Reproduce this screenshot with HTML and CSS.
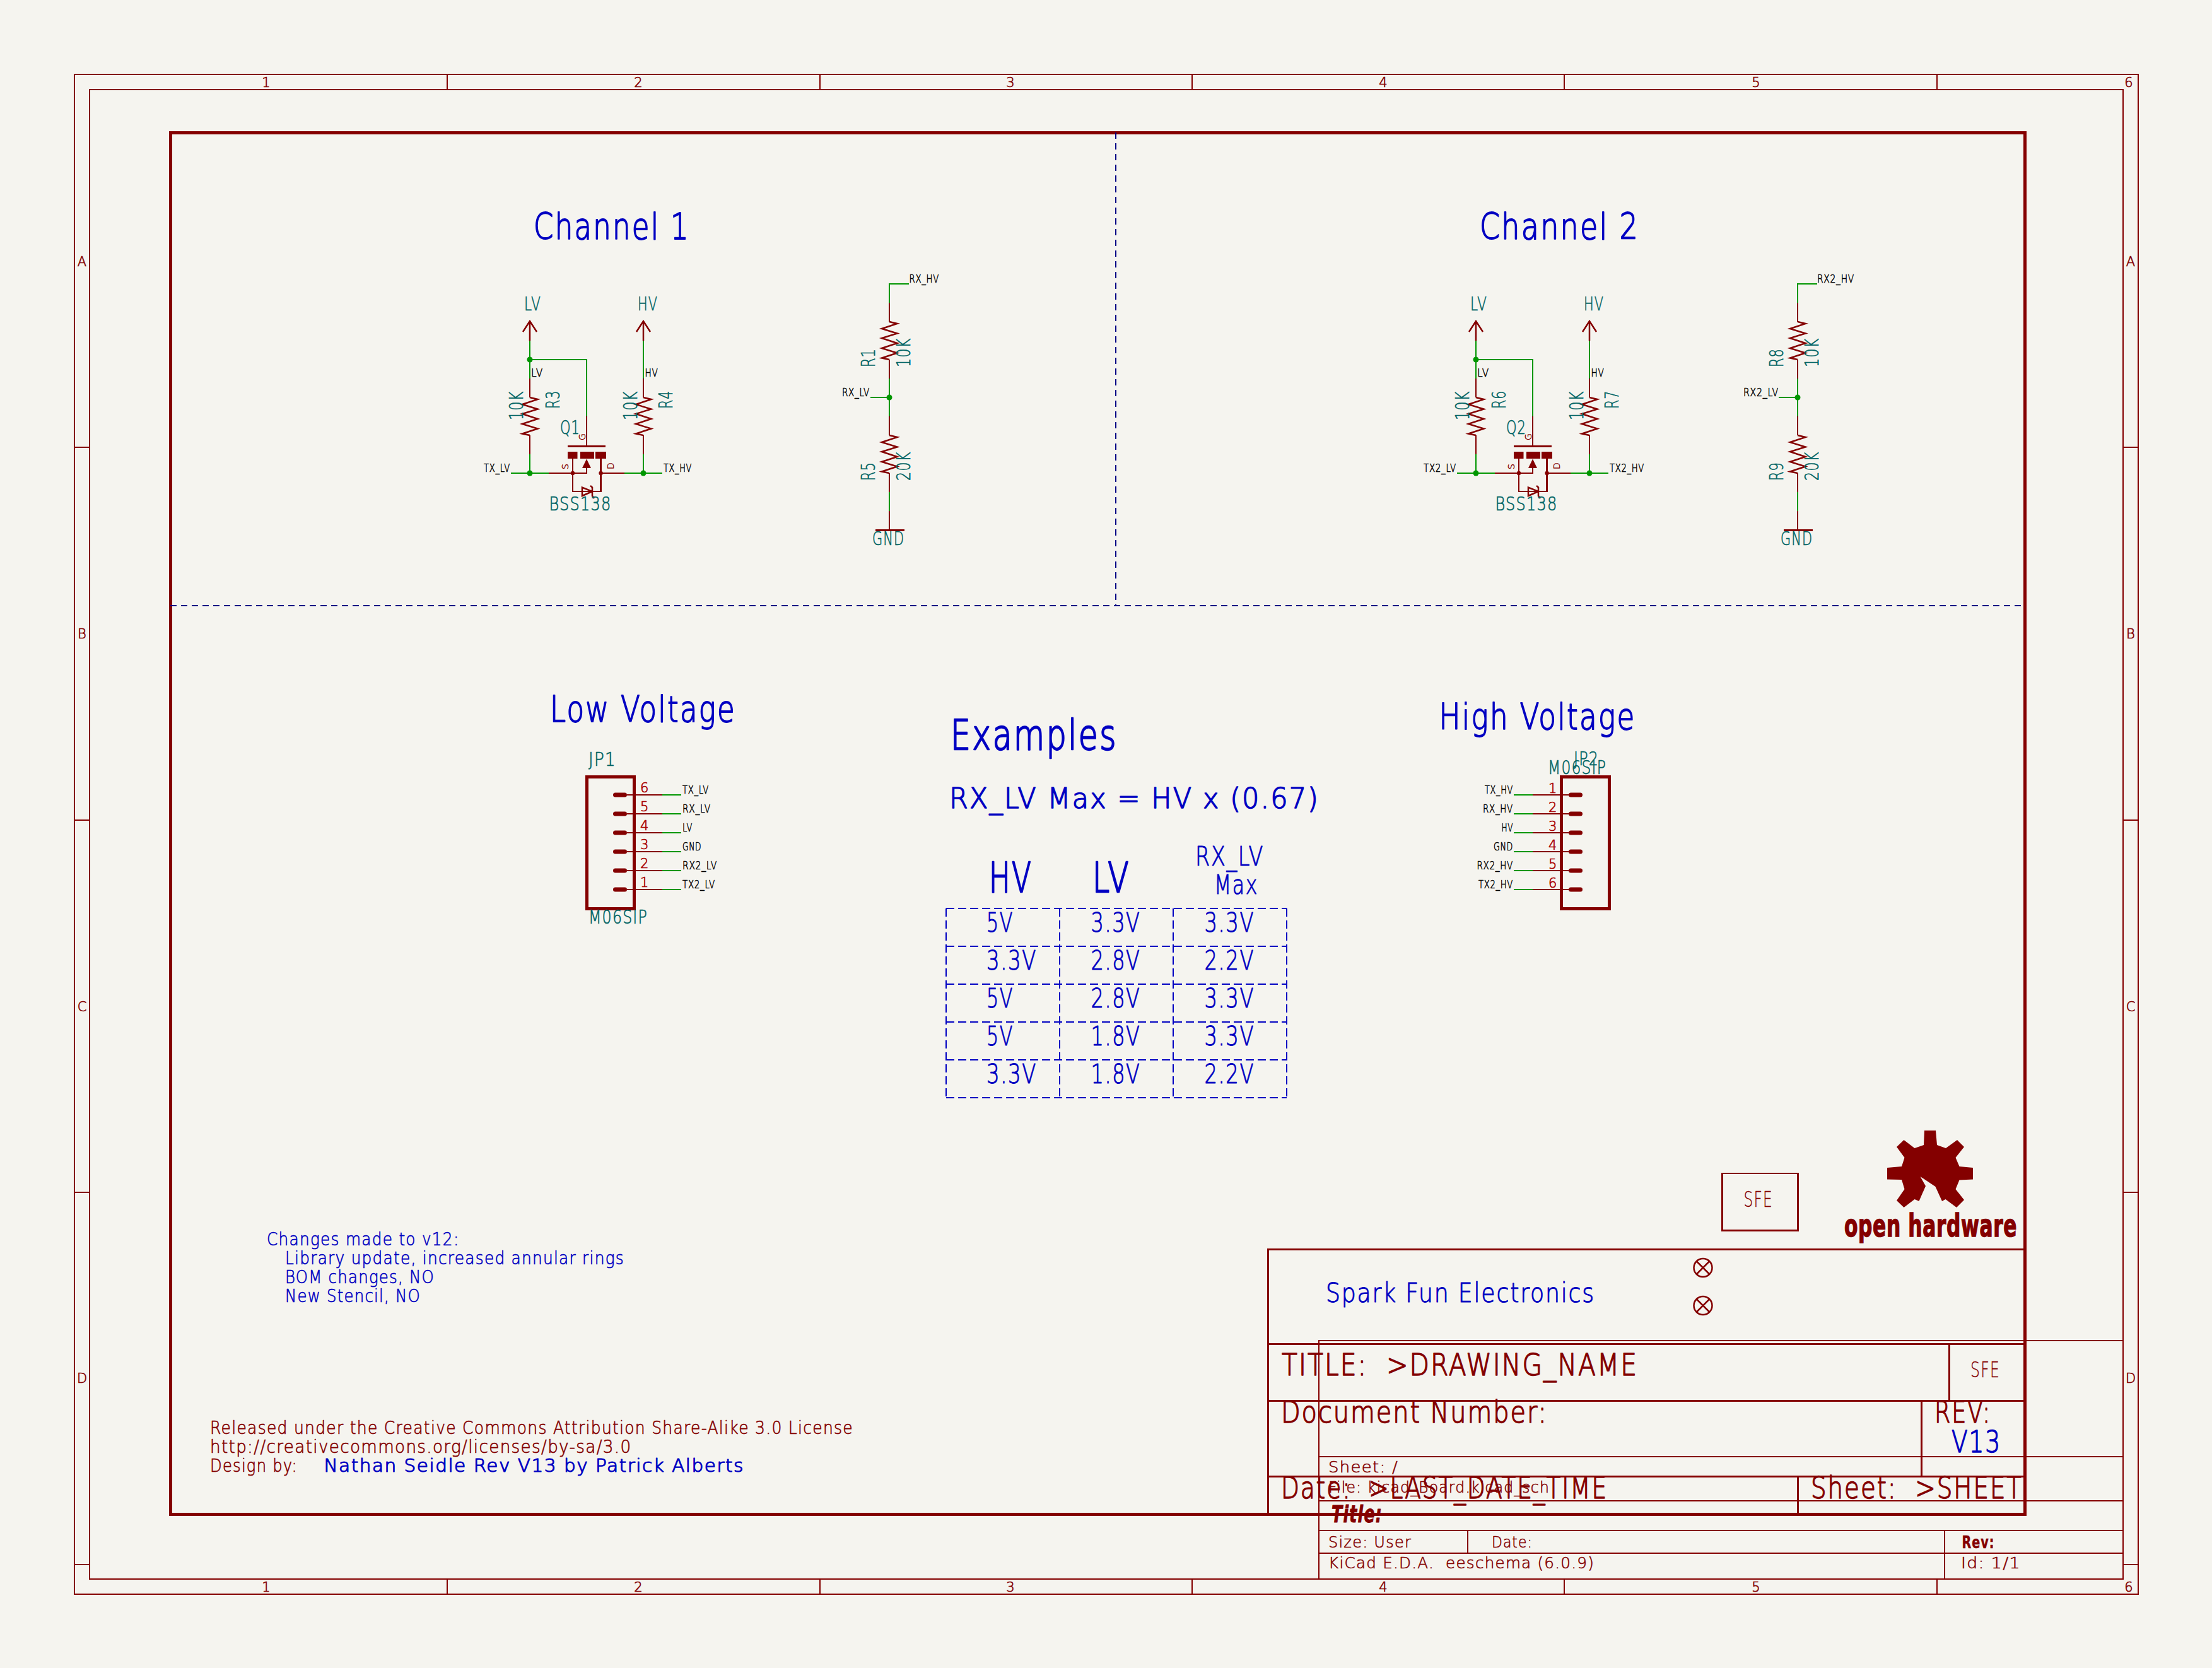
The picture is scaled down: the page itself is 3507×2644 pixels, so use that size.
FILE: index.html
```html
<!DOCTYPE html>
<html lang="en">
<head>
<meta charset="utf-8">
<title>KiCad schematic</title>
<link rel="stylesheet" href="styles.css">
</head>
<body>
<svg class="sheet" width="3507" height="2644" viewBox="0 0 3507 2644" xmlns="http://www.w3.org/2000/svg">
<defs>
  <path id="res" class="sym" d="M0 0L12.5 3L-12 11L12.5 18.5L-12 26L12.5 34L-12 42L12.5 49.5L-12 57.5L0 60"/>
  <g id="ch">
    <path class="wire crisp" d="M840 540V600M840 720V750M840 570H930V660M810 750H870M1020 540V600M1020 720V750M990 750H1050"/>
    <circle class="jw" cx="840" cy="570" r="4.5"/><circle class="jw" cx="840" cy="750" r="4.5"/><circle class="jw" cx="1020" cy="750" r="4.5"/>
    <path class="sym" d="M840 540V509M829 526L840 509L851 526M1020 540V509M1009 526L1020 509L1031 526"/>
    <path class="sym crisp" d="M840 600V630M840 690V720M1020 600V630M1020 690V720M930 660V707M870 750H930V742M908 727V779H952.6V727M952.6 750H990"/>
    <use href="#res" x="840" y="630"/><use href="#res" x="1020" y="630"/>
    <path class="bar crisp" d="M900 707H960"/>
    <rect class="fill" x="900" y="716" width="15.5" height="11"/><rect class="fill" x="920" y="716" width="22" height="11"/><rect class="fill" x="944" y="716" width="17" height="11"/>
    <path class="fill" d="M930 727.5L937 742H923Z"/>
    <circle class="fill" cx="908" cy="750" r="3.2"/><circle class="fill" cx="952.6" cy="750" r="3.2"/>
    <path class="sym" d="M923 772.500V786L939 779ZM936 770L939 772.500V786L942 790"/>
  </g>
  <g id="div">
    <path class="wire crisp" d="M1441 450H1410V480M1410 600V660M1380 630H1410M1410 780V810"/>
    <circle class="jw" cx="1410" cy="630" r="4.5"/>
    <path class="sym crisp" d="M1410 480V510M1410 570V600M1410 660V690M1410 750V780M1410 810V840"/>
    <use href="#res" x="1410" y="510"/><use href="#res" x="1410" y="690"/>
    <path class="bar crisp" d="M1388 840H1434"/>
  </g>
  <g id="pad"><path class="pad" d="M975.500 0H990.500"/></g>
</defs>

<!-- page frame -->
<g class="frame crisp">
  <rect x="118" y="118" width="3272" height="2409"/>
  <rect x="142" y="142" width="3224" height="2361"/>
  <path d="M709 118V142M1299.500 118V142M1890 118V142M2480 118V142M3071 118V142M709 2503V2527M1299.500 2503V2527M1890 2503V2527M2480 2503V2527M3071 2503V2527M118 709H142M118 1300H142M118 1890H142M118 2480H142M3366 709H3390M3366 1300H3390M3366 1890H3390M3366 2480H3390"/>
</g>
<g class="ftext">
  <text x="422" y="138">1</text><text x="1012" y="138">2</text><text x="1602" y="138">3</text><text x="2193" y="138">4</text><text x="2784" y="138">5</text><text x="3375" y="138">6</text>
  <text x="422" y="2523">1</text><text x="1012" y="2523">2</text><text x="1602" y="2523">3</text><text x="2193" y="2523">4</text><text x="2784" y="2523">5</text><text x="3375" y="2523">6</text>
  <text x="130" y="421.500">A</text><text x="130" y="1012">B</text><text x="130" y="1602.500">C</text><text x="130" y="2192">D</text>
  <text x="3378" y="421.500">A</text><text x="3378" y="1012">B</text><text x="3378" y="1602.500">C</text><text x="3378" y="2192">D</text>
</g>

<!-- kicad sheet title block -->
<path class="frame crisp" d="M2091 2503V2125H3366M2091 2308.500H3366M2091 2378.500H3366M2091 2425.500H3366M2091 2461.500H3366M2327 2425.500V2461.500M3083 2425.500V2503"/>
<text class="t tb r" x="2106" y="2334" textLength="111" lengthAdjust="spacingAndGlyphs">Sheet: /</text>
<text class="t tb r" x="2106" y="2366" textLength="351" lengthAdjust="spacingAndGlyphs">File: kicad_Board.kicad_sch</text>
<text class="t tbb r" x="2111" y="2412.500" textLength="81" lengthAdjust="spacingAndGlyphs">Title:</text>
<text class="t tb r" x="2106" y="2453" textLength="132" lengthAdjust="spacingAndGlyphs">Size: User</text>
<text class="t tb r" x="2365" y="2453" textLength="65" lengthAdjust="spacingAndGlyphs">Date:</text>
<text class="t tbr r" x="3110.500" y="2454" textLength="52" lengthAdjust="spacingAndGlyphs">Rev:</text>
<text class="t tb r" x="2106" y="2486" textLength="422" lengthAdjust="spacingAndGlyphs">KiCad E.D.A.  eeschema (6.0.9)</text>
<text class="t tb r" x="3109" y="2486" textLength="95" lengthAdjust="spacingAndGlyphs">Id: 1/1</text>

<!-- outer schematic frame -->
<rect class="thick crisp" x="270" y="210" width="2940.500" height="2190"/>
<path class="dash crisp" d="M1769 210V960M270 960H3210"/>

<!-- channels -->
<use href="#ch"/><use href="#ch" x="1500"/>
<use href="#div"/><use href="#div" x="1440"/>

<text class="t h1 b" x="846" y="379" textLength="248" lengthAdjust="spacingAndGlyphs">Channel 1</text>
<text class="t h1 b" x="2346" y="379" textLength="253" lengthAdjust="spacingAndGlyphs">Channel 2</text>

<text class="t fld g" x="831" y="492" textLength="27" lengthAdjust="spacingAndGlyphs">LV</text>
<text class="t fld g" x="1011" y="492" textLength="32" lengthAdjust="spacingAndGlyphs">HV</text>
<text class="t fld g" x="2331" y="492" textLength="27" lengthAdjust="spacingAndGlyphs">LV</text>
<text class="t fld g" x="2511" y="492" textLength="32" lengthAdjust="spacingAndGlyphs">HV</text>

<text class="t lab k" x="842" y="597" textLength="19" lengthAdjust="spacingAndGlyphs">LV</text>
<text class="t lab k" x="1022.500" y="597" textLength="21" lengthAdjust="spacingAndGlyphs">HV</text>
<text class="t lab k" x="2342" y="597" textLength="19" lengthAdjust="spacingAndGlyphs">LV</text>
<text class="t lab k" x="2522.500" y="597" textLength="21" lengthAdjust="spacingAndGlyphs">HV</text>
<text class="t lab k" x="767" y="748" textLength="42" lengthAdjust="spacingAndGlyphs">TX_LV</text>
<text class="t lab k" x="1052" y="748" textLength="45" lengthAdjust="spacingAndGlyphs">TX_HV</text>
<text class="t lab k" x="2257" y="748" textLength="52" lengthAdjust="spacingAndGlyphs">TX2_LV</text>
<text class="t lab k" x="2552" y="748" textLength="55" lengthAdjust="spacingAndGlyphs">TX2_HV</text>
<text class="t lab k" x="1441.500" y="448" textLength="47.500" lengthAdjust="spacingAndGlyphs">RX_HV</text>
<text class="t lab k" x="1335" y="628" textLength="44" lengthAdjust="spacingAndGlyphs">RX_LV</text>
<text class="t lab k" x="2881" y="448" textLength="59" lengthAdjust="spacingAndGlyphs">RX2_HV</text>
<text class="t lab k" x="2764" y="628" textLength="56" lengthAdjust="spacingAndGlyphs">RX2_LV</text>

<text class="t fld g" transform="translate(829,666) rotate(-90)" textLength="46.500" lengthAdjust="spacingAndGlyphs">10K</text>
<text class="t fld g" transform="translate(886.500,648) rotate(-90)" textLength="29.500" lengthAdjust="spacingAndGlyphs">R3</text>
<text class="t fld g" transform="translate(1010,666) rotate(-90)" textLength="46.500" lengthAdjust="spacingAndGlyphs">10K</text>
<text class="t fld g" transform="translate(1066,648) rotate(-90)" textLength="29.500" lengthAdjust="spacingAndGlyphs">R4</text>
<text class="t fld g" transform="translate(2329,666) rotate(-90)" textLength="46.500" lengthAdjust="spacingAndGlyphs">10K</text>
<text class="t fld g" transform="translate(2386.500,648) rotate(-90)" textLength="29.500" lengthAdjust="spacingAndGlyphs">R6</text>
<text class="t fld g" transform="translate(2510,666) rotate(-90)" textLength="46.500" lengthAdjust="spacingAndGlyphs">10K</text>
<text class="t fld g" transform="translate(2566,648) rotate(-90)" textLength="29.500" lengthAdjust="spacingAndGlyphs">R7</text>

<text class="t fld g" x="888" y="687.500" textLength="32" lengthAdjust="spacingAndGlyphs">Q1</text>
<text class="t fld g" x="2388" y="687.500" textLength="32" lengthAdjust="spacingAndGlyphs">Q2</text>
<text class="t fld g" x="870.500" y="809" textLength="99" lengthAdjust="spacingAndGlyphs">BSS138</text>
<text class="t fld g" x="2370.500" y="809" textLength="99" lengthAdjust="spacingAndGlyphs">BSS138</text>

<text class="t pn r" transform="translate(928,698) rotate(-90)">G</text>
<text class="t pn r" transform="translate(901,744) rotate(-90)">S</text>
<text class="t pn r" transform="translate(973,744) rotate(-90)">D</text>
<text class="t pn r" transform="translate(2428,698) rotate(-90)">G</text>
<text class="t pn r" transform="translate(2401,744) rotate(-90)">S</text>
<text class="t pn r" transform="translate(2473,744) rotate(-90)">D</text>

<text class="t fld g" transform="translate(1387,582) rotate(-90)" textLength="30" lengthAdjust="spacingAndGlyphs">R1</text>
<text class="t fld g" transform="translate(1442.500,582) rotate(-90)" textLength="46.500" lengthAdjust="spacingAndGlyphs">10K</text>
<text class="t fld g" transform="translate(1387,762) rotate(-90)" textLength="30" lengthAdjust="spacingAndGlyphs">R5</text>
<text class="t fld g" transform="translate(1442.500,762) rotate(-90)" textLength="46.500" lengthAdjust="spacingAndGlyphs">20K</text>
<text class="t fld g" x="1383" y="864" textLength="51" lengthAdjust="spacingAndGlyphs">GND</text>
<text class="t fld g" transform="translate(2827,582) rotate(-90)" textLength="30" lengthAdjust="spacingAndGlyphs">R8</text>
<text class="t fld g" transform="translate(2882.500,582) rotate(-90)" textLength="46.500" lengthAdjust="spacingAndGlyphs">10K</text>
<text class="t fld g" transform="translate(2827,762) rotate(-90)" textLength="30" lengthAdjust="spacingAndGlyphs">R9</text>
<text class="t fld g" transform="translate(2882.500,762) rotate(-90)" textLength="46.500" lengthAdjust="spacingAndGlyphs">20K</text>
<text class="t fld g" x="2823" y="864" textLength="51" lengthAdjust="spacingAndGlyphs">GND</text>

<!-- connectors -->
<text class="t h1 b" x="872" y="1144" textLength="295" lengthAdjust="spacingAndGlyphs">Low Voltage</text>
<text class="t h1 b" x="2281.500" y="1156" textLength="312" lengthAdjust="spacingAndGlyphs">High Voltage</text>

<rect class="box crisp" x="930.500" y="1231" width="75" height="209"/>
<text class="t fld g" x="933" y="1214" textLength="44" lengthAdjust="spacingAndGlyphs">JP1</text>
<text class="t fld g" x="933" y="1464" textLength="94" lengthAdjust="spacingAndGlyphs">M06SIP</text>
<path class="wire crisp" d="M1050 1260H1080M1050 1290H1080M1050 1320H1080M1050 1350H1080M1050 1380H1080M1050 1410H1080"/>
<path class="sym crisp" d="M994 1260H1050M994 1290H1050M994 1320H1050M994 1350H1050M994 1380H1050M994 1410H1050"/>
<use href="#pad" y="1260"/><use href="#pad" y="1290"/><use href="#pad" y="1320"/><use href="#pad" y="1350"/><use href="#pad" y="1380"/><use href="#pad" y="1410"/>
<text class="t pin p" x="1015" y="1256">6</text><text class="t pin p" x="1015" y="1286">5</text><text class="t pin p" x="1015" y="1316">4</text><text class="t pin p" x="1015" y="1346">3</text><text class="t pin p" x="1015" y="1376">2</text><text class="t pin p" x="1015" y="1406">1</text>
<text class="t lab k" x="1082" y="1258" textLength="42" lengthAdjust="spacingAndGlyphs">TX_LV</text>
<text class="t lab k" x="1082" y="1288" textLength="45" lengthAdjust="spacingAndGlyphs">RX_LV</text>
<text class="t lab k" x="1082" y="1318" textLength="16" lengthAdjust="spacingAndGlyphs">LV</text>
<text class="t lab k" x="1082" y="1348" textLength="30" lengthAdjust="spacingAndGlyphs">GND</text>
<text class="t lab k" x="1082" y="1378" textLength="55" lengthAdjust="spacingAndGlyphs">RX2_LV</text>
<text class="t lab k" x="1082" y="1408" textLength="52" lengthAdjust="spacingAndGlyphs">TX2_LV</text>

<rect class="box crisp" x="2475.500" y="1231" width="75.500" height="209.500"/>
<text class="t fld g" x="2495" y="1213" textLength="40" lengthAdjust="spacingAndGlyphs">JP2</text>
<text class="t fld g" x="2454" y="1227" textLength="93" lengthAdjust="spacingAndGlyphs">M06SIP</text>
<path class="wire crisp" d="M2400 1260H2430M2400 1290H2430M2400 1320H2430M2400 1350H2430M2400 1380H2430M2400 1410H2430"/>
<path class="sym crisp" d="M2430 1260H2487M2430 1290H2487M2430 1320H2487M2430 1350H2487M2430 1380H2487M2430 1410H2487"/>
<use href="#pad" x="1515" y="1260"/><use href="#pad" x="1515" y="1290"/><use href="#pad" x="1515" y="1320"/><use href="#pad" x="1515" y="1350"/><use href="#pad" x="1515" y="1380"/><use href="#pad" x="1515" y="1410"/>
<text class="t pin p" x="2455" y="1256.500">1</text><text class="t pin p" x="2455" y="1286.500">2</text><text class="t pin p" x="2455" y="1316.500">3</text><text class="t pin p" x="2455" y="1346.500">4</text><text class="t pin p" x="2455" y="1376.500">5</text><text class="t pin p" x="2455" y="1406.500">6</text>
<text class="t lab k" x="2354" y="1258" textLength="45" lengthAdjust="spacingAndGlyphs">TX_HV</text>
<text class="t lab k" x="2351" y="1288" textLength="48" lengthAdjust="spacingAndGlyphs">RX_HV</text>
<text class="t lab k" x="2380.500" y="1318" textLength="18.500" lengthAdjust="spacingAndGlyphs">HV</text>
<text class="t lab k" x="2368" y="1348" textLength="31" lengthAdjust="spacingAndGlyphs">GND</text>
<text class="t lab k" x="2341.500" y="1378" textLength="57.500" lengthAdjust="spacingAndGlyphs">RX2_HV</text>
<text class="t lab k" x="2344" y="1408" textLength="55" lengthAdjust="spacingAndGlyphs">TX2_HV</text>

<!-- examples table -->
<text class="t ex b" x="1507" y="1187.500" textLength="265" lengthAdjust="spacingAndGlyphs">Examples</text>
<text class="t eq b" x="1505" y="1281" textLength="587" lengthAdjust="spacingAndGlyphs">RX_LV Max = HV x (0.67)</text>
<text class="t ex b" x="1568" y="1413.500" textLength="69" lengthAdjust="spacingAndGlyphs">HV</text>
<text class="t ex b" x="1732" y="1413.500" textLength="60" lengthAdjust="spacingAndGlyphs">LV</text>
<text class="t cell b" x="1895" y="1372" textLength="109" lengthAdjust="spacingAndGlyphs">RX_LV</text>
<text class="t cell b" x="1925" y="1416.500" textLength="70" lengthAdjust="spacingAndGlyphs">Max</text>
<path class="tdash crisp" d="M1500 1440H2040M1500 1500H2040M1500 1560H2040M1500 1620H2040M1500 1680H2040M1500 1740H2040M1500 1440V1740M1680 1440V1740M1860 1440V1740M2040 1440V1740"/>
<text class="t cell b" x="1564" y="1477" textLength="43" lengthAdjust="spacingAndGlyphs">5V</text>
<text class="t cell b" x="1729.500" y="1477" textLength="79" lengthAdjust="spacingAndGlyphs">3.3V</text>
<text class="t cell b" x="1909.500" y="1477" textLength="79.500" lengthAdjust="spacingAndGlyphs">3.3V</text>
<text class="t cell b" x="1564" y="1537" textLength="80" lengthAdjust="spacingAndGlyphs">3.3V</text>
<text class="t cell b" x="1729.500" y="1537" textLength="79" lengthAdjust="spacingAndGlyphs">2.8V</text>
<text class="t cell b" x="1909.500" y="1537" textLength="79.500" lengthAdjust="spacingAndGlyphs">2.2V</text>
<text class="t cell b" x="1564" y="1597" textLength="43" lengthAdjust="spacingAndGlyphs">5V</text>
<text class="t cell b" x="1729.500" y="1597" textLength="79" lengthAdjust="spacingAndGlyphs">2.8V</text>
<text class="t cell b" x="1909.500" y="1597" textLength="79.500" lengthAdjust="spacingAndGlyphs">3.3V</text>
<text class="t cell b" x="1564" y="1657" textLength="43" lengthAdjust="spacingAndGlyphs">5V</text>
<text class="t cell b" x="1729.500" y="1657" textLength="79" lengthAdjust="spacingAndGlyphs">1.8V</text>
<text class="t cell b" x="1909.500" y="1657" textLength="79.500" lengthAdjust="spacingAndGlyphs">3.3V</text>
<text class="t cell b" x="1564" y="1717" textLength="80" lengthAdjust="spacingAndGlyphs">3.3V</text>
<text class="t cell b" x="1729.500" y="1717" textLength="79" lengthAdjust="spacingAndGlyphs">1.8V</text>
<text class="t cell b" x="1909.500" y="1717" textLength="79.500" lengthAdjust="spacingAndGlyphs">2.2V</text>

<!-- notes -->
<text class="t note b" x="423" y="1974" textLength="305.500" lengthAdjust="spacingAndGlyphs">Changes made to v12:</text>
<text class="t note b" x="452" y="2004" textLength="538" lengthAdjust="spacingAndGlyphs">Library update, increased annular rings</text>
<text class="t note b" x="452" y="2034" textLength="237" lengthAdjust="spacingAndGlyphs">BOM changes, NO</text>
<text class="t note b" x="452" y="2064" textLength="215" lengthAdjust="spacingAndGlyphs">New Stencil, NO</text>
<text class="t note r" x="333" y="2273" textLength="1020" lengthAdjust="spacingAndGlyphs">Released under the Creative Commons Attribution Share-Alike 3.0 License</text>
<text class="t note r" x="333" y="2303" textLength="668.500" lengthAdjust="spacingAndGlyphs">http://creativecommons.org/licenses/by-sa/3.0</text>
<text class="t note r" x="333" y="2333" textLength="139" lengthAdjust="spacingAndGlyphs">Design by:</text>
<text class="t note2 b" x="513.500" y="2333" textLength="666.500" lengthAdjust="spacingAndGlyphs">Nathan Seidle Rev V13 by Patrick Alberts</text>

<!-- logo and fiducials -->
<rect class="logo-box crisp" x="2730.500" y="1860" width="120" height="90.500"/>
<text class="t sfe r" x="2764.500" y="1912.500" textLength="46.500" lengthAdjust="spacingAndGlyphs">SFE</text>
<path class="fill" d="M3051 1792H3069L3071 1815L3085 1820L3103 1807L3114 1818L3100.500 1835L3106.500 1849L3128 1851V1869.500L3106.500 1870.500L3100.500 1885L3114 1902L3102 1914L3084.500 1901L3079 1904L3068.500 1881L3044.500 1865L3053 1880L3042.500 1904L3035.500 1901L3018.500 1914L3007 1903L3019.500 1885L3015 1870L2992 1869.500V1851L3015 1849L3019.500 1835L3007 1818L3018.500 1807L3035.500 1820L3050 1815Z"/>
<text class="oh" x="2924" y="1959.500" textLength="274" lengthAdjust="spacingAndGlyphs">open hardware</text>

<!-- schematic title block -->
<path class="tbl crisp" d="M2010.500 2400V1980H3210M2010.500 2130.500H3210M2010.500 2220H3210M2010.500 2340H3210M3090.500 2130.500V2220M3046 2220V2340M2850.500 2340V2400"/>
<circle class="fid" cx="2700" cy="2009.500" r="14.500"/><path class="fid" d="M2690 1999.500L2710 2019.500M2710 1999.500L2690 2019.500"/>
<circle class="fid" cx="2700" cy="2069.500" r="14.500"/><path class="fid" d="M2690 2059.500L2710 2079.500M2710 2059.500L2690 2079.500"/>
<text class="t cell b" x="2102" y="2064" textLength="427" lengthAdjust="spacingAndGlyphs">Spark Fun Electronics</text>
<text class="t tt r" x="2032" y="2180" textLength="565" lengthAdjust="spacingAndGlyphs">TITLE:  &gt;DRAWING_NAME</text>
<text class="t sfe r" x="3124" y="2182.500" textLength="47" lengthAdjust="spacingAndGlyphs">SFE</text>
<text class="t tt r" x="2031" y="2255" textLength="423" lengthAdjust="spacingAndGlyphs">Document Number:</text>
<text class="t tt r" x="3067" y="2255" textLength="90" lengthAdjust="spacingAndGlyphs">REV:</text>
<text class="t tt b" x="3094" y="2301.500" textLength="79" lengthAdjust="spacingAndGlyphs">V13</text>
<text class="t tt r" x="2031" y="2375" textLength="518" lengthAdjust="spacingAndGlyphs">Date:  &gt;LAST_DATE_TIME</text>
<text class="t tt r" x="2871" y="2375" textLength="336" lengthAdjust="spacingAndGlyphs">Sheet:  &gt;SHEET</text>
</svg>
</body>
</html>
```

FILE: styles.css
```css
html, body { margin: 0; padding: 0; background: #f5f4ef; }
.sheet { display: block; background: #f5f4ef; }
.crisp { shape-rendering: crispEdges; }

.frame { fill: none; stroke: #840000; stroke-width: 2; }
.thick { fill: none; stroke: #840000; stroke-width: 5; }
.box { fill: none; stroke: #840000; stroke-width: 5; }
.tbl { fill: none; stroke: #840000; stroke-width: 3; }
.logo-box { fill: none; stroke: #840000; stroke-width: 2.500; }
.dash { fill: none; stroke: #000084; stroke-width: 2; stroke-dasharray: 10 7; }
.tdash { fill: none; stroke: #0000c2; stroke-width: 2; stroke-dasharray: 13 6; }
.wire { fill: none; stroke: #009600; stroke-width: 2; }
.sym { fill: none; stroke: #840000; stroke-width: 2.500; }
.bar { fill: none; stroke: #840000; stroke-width: 3; }
.pad { fill: none; stroke: #840000; stroke-width: 7; stroke-linecap: round; }
.fill { fill: #840000; }
.jw { fill: #009600; }
.fid { fill: none; stroke: #840000; stroke-width: 2.500; }

.t {
  font-family: "DejaVu Sans", "Liberation Sans", sans-serif;
  font-weight: 200;
  white-space: pre;
  stroke-linejoin: round;
  letter-spacing: .05em;
}
.b { fill: #0000c2; stroke: #0000c2; }
.r { fill: #840000; stroke: #840000; }
.g { fill: #006464; stroke: #006464; }
.k { fill: #000000; stroke: #000000; }
.p { fill: #a90000; stroke: #a90000; }

.h1 { font-size: 57px; stroke-width: 1.800px; }
.ex { font-size: 65px; stroke-width: 2.400px; }
.eq { font-size: 44px; stroke-width: 1.500px; }
.cell { font-size: 43px; stroke-width: 1px; }
.tt { font-size: 48px; stroke-width: 1.500px; }
.fld { font-size: 30px; stroke-width: .7px; }
.lab { font-size: 18px; stroke-width: .6px; }
.pin { font-size: 21px; stroke-width: .7px; }
.pn { font-size: 14px; stroke-width: .5px; }
.note { font-size: 29px; stroke-width: .7px; }
.note2 { font-size: 29px; stroke-width: 1.200px; }
.sfe { font-size: 33px; stroke-width: .3px; }
.tb { font-size: 24px; stroke-width: .6px; }
.tbb { font-size: 38px; font-weight: 700; font-style: italic; stroke-width: 1px; }
.tbr { font-size: 27px; font-weight: 700; stroke-width: .5px; }
.ftext text {
  font-family: "DejaVu Sans", "Liberation Sans", sans-serif;
  font-weight: 200;
  font-size: 21px;
  fill: #840000;
  stroke: #840000;
  stroke-width: .7px;
  text-anchor: middle;
}
.oh {
  font-family: "DejaVu Sans", "Liberation Sans", sans-serif;
  font-weight: 700;
  font-size: 49px;
  fill: #840000;
  stroke: #840000;
  stroke-width: 1.500px;
  letter-spacing: .02em;
}
```
